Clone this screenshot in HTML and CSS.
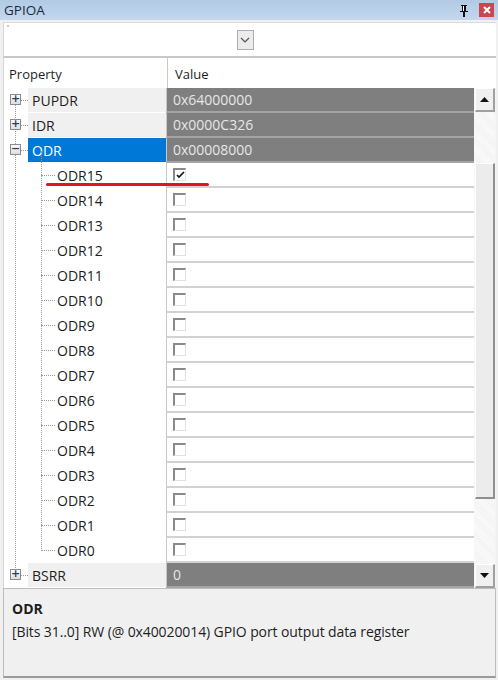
FILE: index.html
```html
<!DOCTYPE html>
<html>
<head>
<meta charset="utf-8">
<link rel="stylesheet" href="styles.css">
</head>
<body>
<div class="window">
  <div class="titlebar">
    <span class="title">GPIOA</span>
    <span class="tb-icons">
      <svg class="pin" width="10" height="12" viewBox="0 0 10 12"><path d="M2 0h6v1H7v5h2v1H6v5H4V7H1V6h2V1H2z" fill="#111"/><rect x="4" y="1" width="1" height="5" fill="#fff"/></svg>
      <span class="close"><svg width="8" height="8" viewBox="0 0 8 8"><path d="M1 1l6 6M7 1l-6 6" stroke="#fff" stroke-width="2"/></svg></span>
    </span>
  </div>
  <div class="body">
    <div class="toolbar">
      <span class="dot"></span>
      <span class="dropbtn"><svg width="10" height="6" viewBox="0 0 10 6"><path d="M1 1l4 4 4-4" fill="none" stroke="#555" stroke-width="1.2"/></svg></span>
    </div>
    <div class="header">
      <div class="hcell hprop">Property</div>
      <div class="hcell hval">Value</div>
    </div>
    <div class="gridwrap">
      <div class="rows">
        <div class="vline top"></div>
        <div class="vline child"></div>
        <div class="row top">
          <div class="exp"><span class="box">+</span><span class="hdot"></span></div>
          <div class="name">PUPDR</div>
          <div class="val dark">0x64000000</div>
        </div>
        <div class="row top">
          <div class="exp"><span class="box">+</span><span class="hdot"></span></div>
          <div class="name">IDR</div>
          <div class="val dark">0x0000C326</div>
        </div>
        <div class="row top">
          <div class="exp"><span class="box">−</span><span class="hdot"></span></div>
          <div class="name sel">ODR</div>
          <div class="val dark">0x00008000</div>
        </div>
        <div class="row sub"><div class="cexp"><span class="hdot2"></span></div><div class="cname">ODR15</div><div class="val"><span class="chk on"><svg width="9" height="8" viewBox="0 0 9 8"><path d="M1 4l2 2 5-5" fill="none" stroke="#111" stroke-width="1.6"/></svg></span></div></div>
        <div class="row sub"><div class="cexp"><span class="hdot2"></span></div><div class="cname">ODR14</div><div class="val"><span class="chk"></span></div></div>
        <div class="row sub"><div class="cexp"><span class="hdot2"></span></div><div class="cname">ODR13</div><div class="val"><span class="chk"></span></div></div>
        <div class="row sub"><div class="cexp"><span class="hdot2"></span></div><div class="cname">ODR12</div><div class="val"><span class="chk"></span></div></div>
        <div class="row sub"><div class="cexp"><span class="hdot2"></span></div><div class="cname">ODR11</div><div class="val"><span class="chk"></span></div></div>
        <div class="row sub"><div class="cexp"><span class="hdot2"></span></div><div class="cname">ODR10</div><div class="val"><span class="chk"></span></div></div>
        <div class="row sub"><div class="cexp"><span class="hdot2"></span></div><div class="cname">ODR9</div><div class="val"><span class="chk"></span></div></div>
        <div class="row sub"><div class="cexp"><span class="hdot2"></span></div><div class="cname">ODR8</div><div class="val"><span class="chk"></span></div></div>
        <div class="row sub"><div class="cexp"><span class="hdot2"></span></div><div class="cname">ODR7</div><div class="val"><span class="chk"></span></div></div>
        <div class="row sub"><div class="cexp"><span class="hdot2"></span></div><div class="cname">ODR6</div><div class="val"><span class="chk"></span></div></div>
        <div class="row sub"><div class="cexp"><span class="hdot2"></span></div><div class="cname">ODR5</div><div class="val"><span class="chk"></span></div></div>
        <div class="row sub"><div class="cexp"><span class="hdot2"></span></div><div class="cname">ODR4</div><div class="val"><span class="chk"></span></div></div>
        <div class="row sub"><div class="cexp"><span class="hdot2"></span></div><div class="cname">ODR3</div><div class="val"><span class="chk"></span></div></div>
        <div class="row sub"><div class="cexp"><span class="hdot2"></span></div><div class="cname">ODR2</div><div class="val"><span class="chk"></span></div></div>
        <div class="row sub"><div class="cexp"><span class="hdot2"></span></div><div class="cname">ODR1</div><div class="val"><span class="chk"></span></div></div>
        <div class="row sub"><div class="cexp"><span class="hdot2"></span></div><div class="cname">ODR0</div><div class="val"><span class="chk"></span></div></div>
        <div class="row top">
          <div class="exp"><span class="box">+</span><span class="hdot"></span></div>
          <div class="name">BSRR</div>
          <div class="val dark">0</div>
        </div>
        <div class="redline"></div>
      </div>
      <div class="scrollbar">
        <div class="sbtn"><svg width="9" height="5" viewBox="0 0 9 5"><path d="M0 5L4.5 0 9 5z" fill="#111"/></svg></div>
        <div class="track">
          <div class="gap1"></div>
          <div class="thumb"></div>
          <div class="gap2"></div>
        </div>
        <div class="sbtn"><svg width="9" height="5" viewBox="0 0 9 5"><path d="M0 0L4.5 5 9 0z" fill="#111"/></svg></div>
      </div>
    </div>
    <div class="desc">
      <div class="dtitle">ODR</div>
      <div class="dtext">[Bits 31..0] RW (@ 0x40020014) GPIO port output data register</div>
    </div>
  </div>
</div>
</body>
</html>
```
FILE: styles.css
```css
* { box-sizing: border-box; }
html, body { margin: 0; padding: 0; background: #fff; }
body { font-family: "Open Sans", "Noto Sans", sans-serif; font-size: 13px; color: #1e1e1e; }
.window { width: 498px; height: 680px; display: flex; flex-direction: column; background: #f0f0f0; }
.titlebar { height: 20px; background: linear-gradient(#b2cae4, #c3d7ee); display: flex; align-items: center; justify-content: space-between; padding: 0 4px 0 4px; flex: none; }
.title { font-size: 13.5px; color: #1b2a3a; }
.tb-icons { display: flex; align-items: center; gap: 10px; }
.pin { margin-top: 1px; }
.close { width: 15px; height: 14px; background: #c9474f; display: flex; align-items: center; justify-content: center; margin-right: 0; }
.body { flex: 1; display: flex; flex-direction: column; margin: 2px 2px 2px 3px; border-top: 1px solid #dcdcdc; background: #fff; }
.toolbar { height: 35px; border-left: 1px solid #d6d6d6; border-bottom: 2px solid #c8c8c8; display: flex; align-items: center; justify-content: center; position: relative; flex: none; padding-right: 18px; }
.dot { position: absolute; left: 3px; top: 2px; width: 2px; height: 2px; background: #ccc; }
.dropbtn { width: 17px; height: 20px; border: 1px solid #adadad; background: #ececec; display: flex; align-items: center; justify-content: center; margin-left: 8px; }
.header { height: 30px; display: flex; border-left: 1px solid #d6d6d6; flex: none; }
.hcell { display: flex; align-items: center; padding-left: 5px; font-size: 13px; padding-top: 1px; }
.hprop { width: 163px; }
.hval { flex: 1; border-left: 1px solid #c8c8c8; padding-left: 7px; }
.gridwrap { height: 500px; display: flex; border-left: 1px solid #d6d6d6; flex: none; }
.rows { flex: 1; position: relative; }
.row { height: 25px; display: flex; }
.exp { width: 24px; position: relative; flex: none; }
.box { position: absolute; left: 6px; top: 6px; width: 11px; height: 11px; border: 1px solid #8c8c8c; background: linear-gradient(#fafafa, #dedede); font-size: 11px; line-height: 8px; text-align: center; color: #2a3f6a; font-family: "DejaVu Sans", sans-serif; font-weight: bold; z-index: 1; }
.hdot { position: absolute; left: 17px; top: 12px; width: 7px; border-top: 1px dotted #9a9a9a; }
.name { width: 138px; flex: none; background: #f0f0f0; border-bottom: 1px solid #fff; display: flex; align-items: center; padding-left: 4px; font-size: 14px; color: #1e1e1e; }
.name.sel { background: #0078d7; color: #fff; }
.val { flex: 1; border-left: 1px solid #c8c8c8; border-bottom: 2px solid #d2d2d2; display: flex; align-items: center; padding-left: 6px; font-size: 14px; }
.val.dark { background: #7f7f7f; color: #e6e6e6; border-bottom: 2px solid #a4a4a4; }
.cexp { width: 50px; position: relative; flex: none; }
.hdot2 { position: absolute; left: 37px; top: 12px; width: 14px; border-top: 1px dotted #9a9a9a; }
.cname { width: 112px; flex: none; display: flex; align-items: center; padding-left: 3px; font-size: 14px; }
.chk { width: 13px; height: 13px; border-top: 2px solid #8a8a8a; border-left: 2px solid #8a8a8a; border-right: 1px solid #e2e2e2; border-bottom: 1px solid #e2e2e2; background: #fff; display: flex; align-items: center; justify-content: center; margin-top: -1px; }
.vline { position: absolute; border-left: 1px dotted #9a9a9a; }
.vline.top { left: 11px; top: 12px; height: 480px; }
.vline.child { left: 37px; top: 63px; height: 400px; }
.redline { position: absolute; left: 42px; top: 95px; width: 163px; height: 3px; background: #e3141d; border-radius: 2px; }
.scrollbar { width: 22px; display: flex; flex-direction: column; background: #f4f4f4; padding-right: 1px; flex: none; }
.sbtn { height: 24px; margin-left: 1px; background: #f0f0f0; border-top: 1px solid #fff; border-left: 1px solid #fff; border-right: 2px solid #a0a0a0; border-bottom: 2px solid #a0a0a0; display: flex; align-items: center; justify-content: center; flex: none; }
.track { flex: 1; display: flex; flex-direction: column; background-color: #f3f3f3; background-image: repeating-linear-gradient(45deg, #fafafa 0 1px, transparent 1px 2px); }
.gap1 { height: 51px; }
.thumb { height: 336px; margin-left: 1px; background: #ececec; border-top: 1px solid #fff; border-left: 1px solid #fff; border-right: 2px solid #8f8f8f; border-bottom: 2px solid #8f8f8f; }
.gap2 { flex: 1; }
.desc { flex: 1; background: #f0f0f0; border: 1px solid #bdbdbd; border-bottom: 2px solid #9a9a9a; padding: 7px 8px; }
.dtitle { font-weight: bold; font-size: 14px; color: #1e1e1e; margin-top: 3px; }
.dtext { font-size: 14px; margin-top: 4px; color: #1e1e1e; letter-spacing: -0.1px; }
```
